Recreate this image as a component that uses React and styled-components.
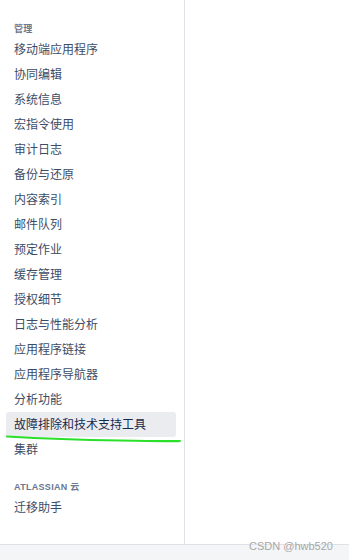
import React from 'react';
import styled, { createGlobalStyle } from 'styled-components';

const GlobalStyle = createGlobalStyle`
  html, body {
    margin: 0;
    padding: 0;
    background: #ffffff;
  }
  body {
    font-family: "Liberation Sans", "Noto Sans CJK SC", sans-serif;
  }
`;

const Page = styled.div`
  position: relative;
  width: 349px;
  height: 560px;
  display: flex;
  flex-direction: column;
  overflow: hidden;
`;

const Body = styled.div`
  flex: 1;
  display: flex;
`;

const Sidebar = styled.nav`
  width: 184px;
  border-right: 1px solid #dfe1e6;
  padding-top: 21px;
  box-sizing: content-box;
`;

const Main = styled.main`
  flex: 1;
`;

const Section = styled.div`
  margin-top: ${(p) => p.$gap || 0}px;
`;

const Heading = styled.h4`
  margin: 0;
  height: 16px;
  box-sizing: border-box;
  padding: 1px 0 0 14px;
  line-height: 15px;
  font-size: 9px;
  font-weight: 700;
  letter-spacing: 0.3px;
  color: #6b778c;
  text-transform: uppercase;
`;

const Item = styled.a`
  display: block;
  box-sizing: border-box;
  margin: 0 8px 0 6px;
  padding: 3px 0 0 8px;
  height: 25px;
  line-height: 21px;
  border-radius: 3px;
  font-size: 12px;
  color: ${(p) => (p.$active ? '#172b4d' : '#3d4c66')};
  background: ${(p) => (p.$active ? '#ebecf0' : 'transparent')};
  text-decoration: none;
  white-space: nowrap;
`;

const Footer = styled.footer`
  height: 15px;
  border-top: 1px solid #dfe1e6;
  background: #f4f5f7;
`;

const Underline = styled.svg`
  position: absolute;
  left: 0;
  top: 0;
  pointer-events: none;
`;

const Watermark = styled.span`
  position: absolute;
  left: 249px;
  top: 539px;
  font-size: 11px;
  line-height: 14px;
  color: #a5a5a5;
  text-shadow: 0 0 1px #ffffff;
`;

const adminItems = [
  '移动端应用程序',
  '协同编辑',
  '系统信息',
  '宏指令使用',
  '审计日志',
  '备份与还原',
  '内容索引',
  '邮件队列',
  '预定作业',
  '缓存管理',
  '授权细节',
  '日志与性能分析',
  '应用程序链接',
  '应用程序导航器',
  '分析功能',
  '故障排除和技术支持工具',
  '集群',
];

const App = () => (
  <Page>
    <GlobalStyle />
    <Body>
      <Sidebar>
        <Section>
          <Heading>管理</Heading>
          {adminItems.map((label) => (
            <Item key={label} $active={label === '故障排除和技术支持工具'}>
              {label}
            </Item>
          ))}
        </Section>
        <Section $gap={17}>
          <Heading>ATLASSIAN 云</Heading>
          <Item>迁移助手</Item>
        </Section>
      </Sidebar>
      <Main />
    </Body>
    <Footer />
    <Underline width="349" height="560">
      <path
        d="M7 436.5 Q 60 439.5 120 440.5 T 180 441"
        fill="none"
        stroke="#2be02b"
        strokeWidth="2.2"
        strokeLinecap="round"
      />
    </Underline>
    <Watermark>CSDN @hwb520</Watermark>
  </Page>
);

export default App;
